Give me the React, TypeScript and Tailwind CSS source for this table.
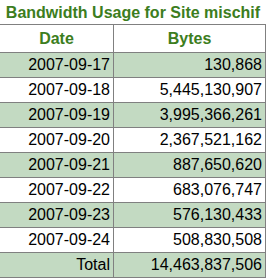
import React from "react";

type Row = {
    date: string;
    bytes: string;
};

const rows: Row[] = [
    { date: "2007-09-17", bytes: "130,868" },
    { date: "2007-09-18", bytes: "5,445,130,907" },
    { date: "2007-09-19", bytes: "3,995,366,261" },
    { date: "2007-09-20", bytes: "2,367,521,162" },
    { date: "2007-09-21", bytes: "887,650,620" },
    { date: "2007-09-22", bytes: "683,076,747" },
    { date: "2007-09-23", bytes: "576,130,433" },
    { date: "2007-09-24", bytes: "508,830,508" },
    { date: "Total", bytes: "14,463,837,506" },
];

const App = () => {
    return (
        <div className="w-[266px] bg-white font-['Liberation_Sans',Arial,sans-serif] text-[16px]">
            <div className="h-6 pt-px text-center font-bold leading-6 text-[#3c7d20]">
                Bandwidth Usage for Site mischif
            </div>
            <div className="border-t border-[#808080]">
                <div className="flex h-[28px] border-b border-[#808080] font-bold text-[#3c7d20]">
                    <div className="flex w-[114px] items-center justify-center border-r border-[#808080]">
                        Date
                    </div>
                    <div className="flex w-[152px] items-center justify-center border-r border-[#808080]">
                        Bytes
                    </div>
                </div>
                {rows.map((row, i) => (
                    <div
                        key={row.date}
                        className={`flex h-[25px] border-b border-[#808080] text-black ${
                            i % 2 === 0 ? "bg-[#c3dac2]" : "bg-white"
                        }`}
                    >
                        <div className="flex w-[114px] items-center justify-end border-r border-[#808080] pr-[3px]">
                            {row.date}
                        </div>
                        <div className="flex w-[152px] items-center justify-end border-r border-[#808080] pr-[3px]">
                            {row.bytes}
                        </div>
                    </div>
                ))}
            </div>
        </div>
    );
};

export default App;
